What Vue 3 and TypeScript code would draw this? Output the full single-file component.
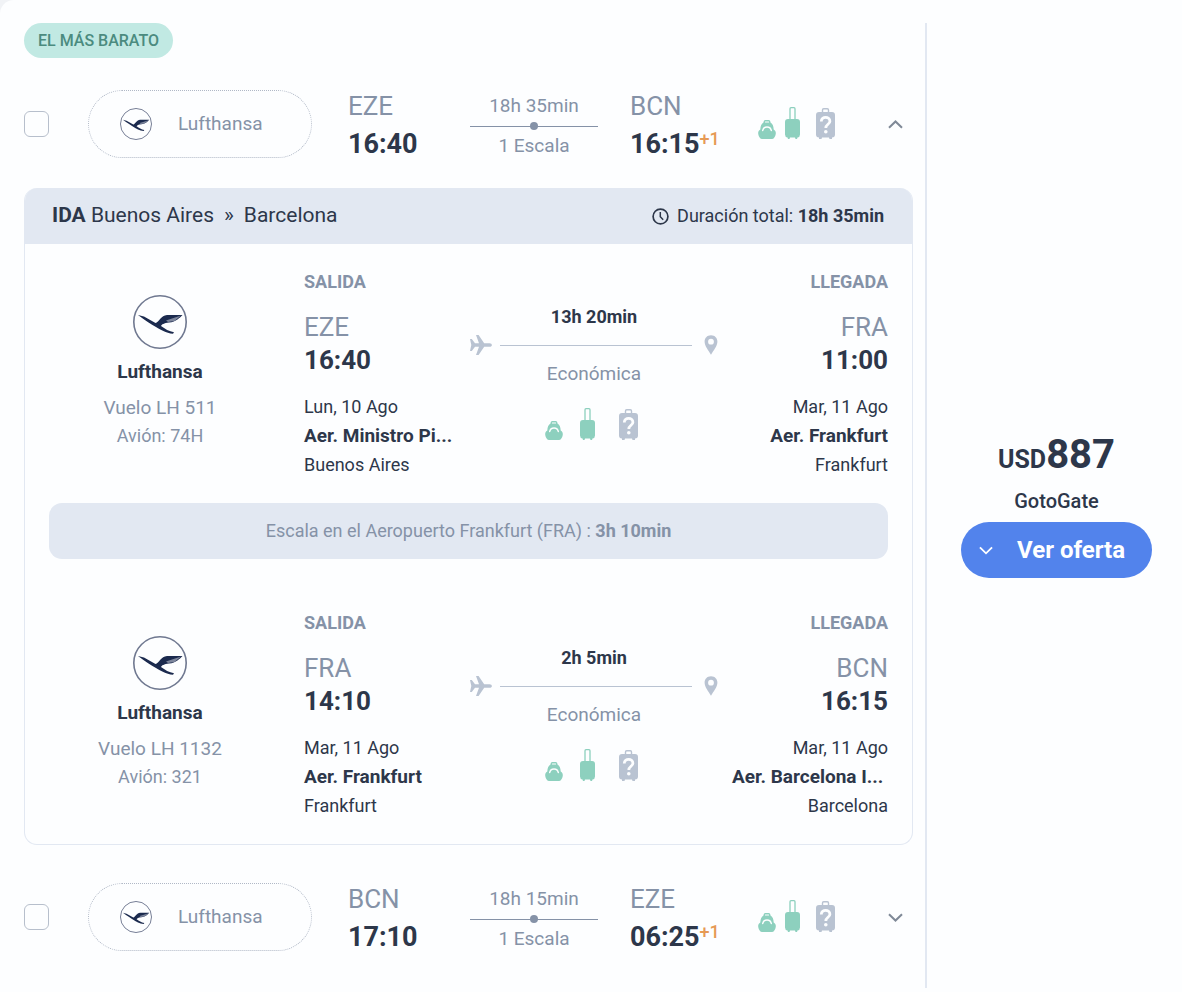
<script setup lang="ts">
import { reactive } from 'vue'

interface Stop {
  code: string
  time: string
  date: string
  airport: string
  city: string
}

interface Segment {
  airline: string
  flight: string
  plane: string
  duration: string
  cabin: string
  from: Stop
  to: Stop
  layover?: { place: string; time: string }
}

interface Leg {
  id: string
  label: string
  airline: string
  from: { code: string; time: string; city: string }
  to: { code: string; time: string; city: string; days: string }
  duration: string
  stops: string
  open: boolean
  selected: boolean
  segments: Segment[]
}

const legs = reactive<Leg[]>([
  {
    id: 'outbound',
    label: 'IDA',
    airline: 'Lufthansa',
    from: { code: 'EZE', time: '16:40', city: 'Buenos Aires' },
    to: { code: 'BCN', time: '16:15', city: 'Barcelona', days: '+1' },
    duration: '18h 35min',
    stops: '1 Escala',
    open: true,
    selected: false,
    segments: [
      {
        airline: 'Lufthansa',
        flight: 'Vuelo LH 511',
        plane: 'Avión: 74H',
        duration: '13h 20min',
        cabin: 'Económica',
        from: { code: 'EZE', time: '16:40', date: 'Lun, 10 Ago', airport: 'Aer. Ministro Pi...', city: 'Buenos Aires' },
        to: { code: 'FRA', time: '11:00', date: 'Mar, 11 Ago', airport: 'Aer. Frankfurt', city: 'Frankfurt' },
        layover: { place: 'Escala en el Aeropuerto Frankfurt (FRA) :', time: '3h 10min' },
      },
      {
        airline: 'Lufthansa',
        flight: 'Vuelo LH 1132',
        plane: 'Avión: 321',
        duration: '2h 5min',
        cabin: 'Económica',
        from: { code: 'FRA', time: '14:10', date: 'Mar, 11 Ago', airport: 'Aer. Frankfurt', city: 'Frankfurt' },
        to: { code: 'BCN', time: '16:15', date: 'Mar, 11 Ago', airport: 'Aer. Barcelona I...\u00a0', city: 'Barcelona' },
      },
    ],
  },
  {
    id: 'return',
    label: 'VUELTA',
    airline: 'Lufthansa',
    from: { code: 'BCN', time: '17:10', city: 'Barcelona' },
    to: { code: 'EZE', time: '06:25', city: 'Buenos Aires', days: '+1' },
    duration: '18h 15min',
    stops: '1 Escala',
    open: false,
    selected: false,
    segments: [],
  },
])
</script>

<template>
  <svg class="defs" width="0" height="0" aria-hidden="true">
    <symbol id="crane" viewBox="0 0 54 54">
      <circle cx="27" cy="27" r="26.200" fill="none" stroke="#6f7890" stroke-width="1.600" />
      <path d="M5 20 L11 21.500 L22.500 28 C26 27 28 20.500 34 20 L49.500 20 C47 22.500 43 27 36 27.500 C31 28 28.500 29.500 28 31 C32 34 36 36.300 41 37.200 L40 38.800 C33 38 27 34.500 23 32 C18 29.500 12 25 5 20 Z" fill="#1b2a4e" />
      <path d="M33 25.500 L39 23.500 L48 20.500 L41.500 26 L35 27 Z" fill="#7d869c" />
    </symbol>
    <symbol id="backpack" viewBox="0 0 18 32">
      <path d="M6.300 16.500 V14.700 Q6.300 13.700 7.300 13.700 H10.700 Q11.700 13.700 11.700 14.700 V16.500" fill="none" stroke="#8dd0be" stroke-width="1.400" />
      <path d="M5.500 15.500 H12.500 C14.800 16.800 15.500 19.500 15.700 22.500 C17.300 23.500 18 25 17.800 26.500 C17.600 28.500 16.800 30 15.800 31.200 Q15.200 32 14 32 H4 Q2.800 32 2.200 31.200 C1.200 30 .4 28.500 .2 26.500 C0 25 .7 23.500 2.300 22.500 C2.500 19.500 3.200 16.800 5.500 15.500 Z" fill="#8dd0be" />
      <path d="M4.700 23.500 C5.500 18.700 12.500 18.700 13.300 23.500" fill="none" stroke="#fdfeff" stroke-width="1.500" stroke-linecap="round" />
    </symbol>
    <symbol id="trolley" viewBox="0 0 15 32">
      <path d="M5 12.500 V1.700 Q5 .7 6 .7 H9 Q10 .7 10 1.700 V12.500" fill="none" stroke="#8dd0be" stroke-width="1.300" />
      <path d="M3 12 H12 Q15 12 15 15 V27.500 Q15 30 12.500 30.500 L12 32 H10.500 L10 30.500 H5 L4.500 32 H3 L2.500 30.500 Q0 30 0 27.500 V15 Q0 12 3 12 Z" fill="#8dd0be" />
    </symbol>
    <symbol id="suitcase" viewBox="0 0 19 32">
      <path d="M6.500 6 V3 Q6.500 1.700 7.700 1.700 H11.300 Q12.500 1.700 12.500 3 V6" fill="none" stroke="#b9c3d2" stroke-width="1.400" />
      <path d="M3 5 H16 Q19 5 19 8 V27.500 Q19 30.500 16 30.500 V32 H13.500 L13 30.500 H6 L5.500 32 H3 V30.500 Q0 30.500 0 27.500 V8 Q0 5 3 5 Z" fill="#b9c3d2" />
      <path d="M5.300 14.500 C5.300 9 13.900 9 13.900 14.200 C13.900 17.300 9.800 17.300 9.800 21" fill="none" stroke="#fdfeff" stroke-width="2.800" />
      <circle cx="9.800" cy="24.700" r="1.800" fill="#fdfeff" />
    </symbol>
    <symbol id="plane" viewBox="0 0 22 20">
      <path d="M0 4 H1.800 L5 8.200 H9 L6 0 H8.600 L14.200 8.200 H19.500 C22.700 8.200 22.700 11.800 19.500 11.800 H14.200 L8.600 20 H6 L9 11.800 H5 L1.800 16 H0 L1.300 10 Z" fill="#b9c3d2" />
    </symbol>
    <symbol id="pin" viewBox="0 0 14 20">
      <path d="M7 .3 C3 .3 .6 3.200 .6 6.700 C.6 11 4.600 15.500 7 19.800 C9.400 15.500 13.400 11 13.400 6.700 C13.400 3.200 11 .3 7 .3 Z M7 3.800 A2.900 2.900 0 1 1 7 9.600 A2.900 2.900 0 1 1 7 3.800 Z" fill="#b9c3d2" fill-rule="evenodd" />
    </symbol>
    <symbol id="clock" viewBox="0 0 17 17">
      <circle cx="8.500" cy="8.500" r="7.400" fill="none" stroke="#2d374a" stroke-width="1.700" />
      <path d="M8.300 4 V8.700 L11.200 11.700" fill="none" stroke="#2d374a" stroke-width="1.500" />
    </symbol>
    <symbol id="chevron" viewBox="0 0 15 9">
      <path d="M1 1.200 L7.500 7.500 L14 1.200" fill="none" stroke="currentColor" stroke-width="2" />
    </symbol>
  </svg>

  <article class="offer">
    <main class="legs">
      <span class="tag">EL MÁS BARATO</span>

      <section v-for="leg in legs" :key="leg.id" class="leg">
        <div class="summary">
          <input
            :id="leg.id"
            v-model="leg.selected"
            class="check"
            type="checkbox"
            :aria-label="`${leg.from.code} ${leg.to.code}`"
          />
          <label class="carrier" :for="leg.id">
            <svg class="logo-small"><use href="#crane" /></svg>
            <span>{{ leg.airline }}</span>
          </label>
          <div class="point">
            <div class="code">{{ leg.from.code }}</div>
            <div class="hour">{{ leg.from.time }}</div>
          </div>
          <div class="trip">
            <div>{{ leg.duration }}</div>
            <div class="track"><i class="dot"></i></div>
            <div>{{ leg.stops }}</div>
          </div>
          <div class="point">
            <div class="code">{{ leg.to.code }}</div>
            <div class="hour">{{ leg.to.time }}<span class="days">{{ leg.to.days }}</span></div>
          </div>
          <div class="extras">
            <div class="bags">
              <svg class="backpack"><use href="#backpack" /></svg>
              <svg class="trolley"><use href="#trolley" /></svg>
              <svg class="suitcase"><use href="#suitcase" /></svg>
            </div>
            <button
              class="toggle"
              :class="{ open: leg.open }"
              type="button"
              aria-label="Detalles"
              :aria-expanded="leg.open"
              @click="leg.open = !leg.open"
            >
              <svg class="chevron"><use href="#chevron" /></svg>
            </button>
          </div>
        </div>

        <div v-if="leg.open && leg.segments.length" class="details">
          <header class="details-head">
            <div class="route"><b>{{ leg.label }}</b> {{ leg.from.city }}<span class="arrow">»</span>{{ leg.to.city }}</div>
            <div class="total">
              <svg class="clock"><use href="#clock" /></svg>
              <span>Duración total: <b>{{ leg.duration }}</b></span>
            </div>
          </header>

          <template v-for="segment in leg.segments" :key="segment.flight">
            <div class="segment">
              <div class="airline">
                <svg class="logo"><use href="#crane" /></svg>
                <div class="airline-name">{{ segment.airline }}</div>
                <div class="flight">{{ segment.flight }}</div>
                <div class="aircraft">{{ segment.plane }}</div>
              </div>
              <div class="end">
                <div class="caption">SALIDA</div>
                <div class="end-code">{{ segment.from.code }}</div>
                <div class="end-hour">{{ segment.from.time }}</div>
                <div class="line first">{{ segment.from.date }}</div>
                <div class="line airport">{{ segment.from.airport }}</div>
                <div class="line">{{ segment.from.city }}</div>
              </div>
              <div class="middle">
                <div class="time">{{ segment.duration }}</div>
                <div class="path">
                  <svg class="plane"><use href="#plane" /></svg>
                  <i class="rule"></i>
                  <svg class="pin"><use href="#pin" /></svg>
                </div>
                <div class="cabin">{{ segment.cabin }}</div>
                <div class="bags wide">
                  <svg class="backpack"><use href="#backpack" /></svg>
                  <svg class="trolley"><use href="#trolley" /></svg>
                  <svg class="suitcase"><use href="#suitcase" /></svg>
                </div>
              </div>
              <div class="end arrival">
                <div class="caption">LLEGADA</div>
                <div class="end-code">{{ segment.to.code }}</div>
                <div class="end-hour">{{ segment.to.time }}</div>
                <div class="line first">{{ segment.to.date }}</div>
                <div class="line airport">{{ segment.to.airport }}</div>
                <div class="line">{{ segment.to.city }}</div>
              </div>
            </div>
            <div v-if="segment.layover" class="layover">
              {{ segment.layover.place }} <b>{{ segment.layover.time }}</b>
            </div>
          </template>
        </div>
      </section>
    </main>

    <aside class="deal">
      <div class="price"><span class="currency">USD</span>887</div>
      <div class="seller">GotoGate</div>
      <button class="cta" type="button">
        <svg class="cta-chevron"><use href="#chevron" /></svg>
        <span>Ver oferta</span>
      </button>
    </aside>
  </article>
</template>

<style>
body {
  background: #f1f3f6;
}
</style>

<style scoped>
.defs {
  position: absolute;
}
.offer {
  box-sizing: border-box;
  display: flex;
  min-height: 100vh;
  padding: 23px 0 4px;
  border-top-left-radius: 14px;
  background: #fdfeff;
  color: #2d374a;
  font-family: Roboto, "Liberation Sans", sans-serif;
  font-size: 18px;
  line-height: 28px;
}
.offer svg {
  display: block;
  flex: none;
}
b {
  font-weight: 700;
}
.legs {
  flex: 1;
  min-width: 0;
  padding: 0 12px 0 24px;
}
.tag {
  display: table;
  padding: 0 14px;
  border-radius: 18px;
  background: #c1e9e3;
  color: #4b8b7f;
  font-size: 16px;
  font-weight: 500;
  line-height: 35px;
}
.leg {
  padding-top: 27px;
}
.leg + .leg {
  padding-top: 33px;
}
.summary {
  display: grid;
  grid-template-columns: 64fr 260fr 122fr 160fr 128fr 155fr;
  align-items: center;
}
.check {
  appearance: none;
  width: 25px;
  height: 26px;
  margin: 0;
  border: 1px solid #b7bfcc;
  border-radius: 6px;
  background: #fdfeff;
}
.check:checked {
  background: #5283ec;
}
.carrier {
  box-sizing: border-box;
  display: flex;
  align-items: center;
  gap: 26px;
  height: 68px;
  margin-right: 36px;
  padding-left: 31px;
  border: 1px dotted #b0b8c6;
  border-radius: 34px;
  color: #8592a7;
  font-size: 19px;
}
.logo-small {
  width: 32px;
  height: 32px;
}
.point {
  padding-top: 2px;
}
.code,
.hour {
  line-height: 38px;
  white-space: nowrap;
}
.code {
  color: #8592a7;
  font-size: 26px;
}
.hour {
  font-size: 27px;
  font-weight: 700;
}
.days {
  color: #e69a55;
  font-size: 18px;
  font-weight: 500;
  line-height: 18px;
  vertical-align: 8px;
}
.trip {
  margin-right: 32px;
  padding-top: 4px;
  color: #8592a7;
  font-size: 19px;
  text-align: center;
  white-space: nowrap;
}
.track {
  display: flex;
  align-items: center;
  justify-content: center;
  height: 12px;
  background: linear-gradient(#8592a7, #8592a7) center / 100% 1px no-repeat;
}
.dot {
  width: 8px;
  height: 8px;
  border-radius: 50%;
  background: #8592a7;
}
.extras {
  display: flex;
  align-items: center;
  justify-content: space-between;
  padding-right: 10px;
}
.bags {
  display: flex;
  padding-bottom: 2px;
}
.backpack {
  width: 18px;
  height: 32px;
  margin-right: 9px;
}
.trolley {
  width: 15px;
  height: 32px;
  margin-right: 16px;
}
.suitcase {
  width: 19px;
  height: 32px;
}
.wide {
  justify-content: center;
  margin-top: 20px;
  padding: 0 6px 0 0;
}
.wide .backpack {
  margin-right: 17px;
}
.wide .trolley {
  margin-right: 24px;
}
.toggle {
  padding: 0;
  border: 0;
  background: none;
  color: #7f8997;
  cursor: pointer;
}
.toggle.open {
  transform: rotate(180deg);
}
.chevron {
  width: 15px;
  height: 9px;
}
.details {
  margin-top: 25px;
  padding-bottom: 24px;
  border: 1px solid #e2e8f2;
  border-top: 0;
  border-radius: 13px;
  overflow: hidden;
}
.details-head {
  display: flex;
  align-items: center;
  justify-content: space-between;
  height: 56px;
  padding: 0 28px 0 27px;
  background: #e2e8f2;
}
.route {
  padding-bottom: 2px;
  font-size: 21px;
}
.arrow {
  margin: 0 10px;
}
.total {
  display: flex;
  align-items: center;
  gap: 8px;
}
.clock {
  width: 17px;
  height: 17px;
}
.segment {
  display: grid;
  grid-template-columns: 255fr 166fr 248fr 170fr;
  padding: 26px 24px 0;
}
.airline {
  display: flex;
  flex-direction: column;
  align-items: center;
  margin-right: 33px;
  padding-top: 25px;
  color: #8592a7;
}
.logo {
  width: 54px;
  height: 54px;
}
.airline-name {
  margin-top: 9px;
  color: #2d374a;
  font-size: 19px;
  font-weight: 700;
}
.flight {
  margin-top: 8px;
  font-size: 19px;
}
.caption {
  color: #8592a7;
  font-weight: 700;
  line-height: 24px;
}
.end {
  white-space: nowrap;
}
.arrival {
  display: flex;
  flex-direction: column;
  align-items: flex-end;
}
.end-code,
.end-hour {
  font-size: 26px;
  line-height: 33px;
}
.end-code {
  margin-top: 17px;
  color: #8592a7;
}
.end-hour {
  font-weight: 700;
}
.line {
  line-height: 29px;
}
.first {
  margin-top: 15px;
}
.airport {
  font-size: 19px;
  font-weight: 700;
}
.middle {
  padding-top: 33px;
  text-align: center;
}
.time {
  font-weight: 700;
}
.path {
  display: flex;
  align-items: center;
  height: 24px;
  margin-top: 2px;
}
.plane {
  width: 22px;
  height: 20px;
}
.rule {
  flex: 1;
  height: 1px;
  margin: 0 12px 0 8px;
  background: #b9c3d2;
}
.pin {
  width: 14px;
  height: 20px;
}
.cabin {
  margin-top: 3px;
  color: #8592a7;
  font-size: 19px;
}
.layover {
  margin: 24px 24px 26px;
  border-radius: 13px;
  background: #e2e8f2;
  color: #8592a7;
  line-height: 56px;
  text-align: center;
}
.deal {
  box-sizing: border-box;
  display: flex;
  flex: none;
  flex-direction: column;
  align-items: center;
  justify-content: center;
  width: 257px;
  padding: 0 30px 0 34px;
  border-left: 2px solid #e2e8f2;
}
.price {
  font-size: 40px;
  font-weight: 700;
  line-height: 44px;
}
.currency {
  font-size: 25px;
  font-weight: 700;
  line-height: 25px;
}
.seller {
  margin-top: 10px;
  font-size: 20px;
  font-weight: 500;
}
.cta {
  display: flex;
  align-items: center;
  gap: 24px;
  width: 100%;
  height: 56px;
  margin-top: 7px;
  padding: 0 18px;
  border: 0;
  border-radius: 28px;
  background: #5283ec;
  color: #fff;
  font-family: inherit;
  font-size: 24px;
  font-weight: 700;
  white-space: nowrap;
  cursor: pointer;
}
.cta-chevron {
  width: 14px;
  height: 9px;
}
</style>
